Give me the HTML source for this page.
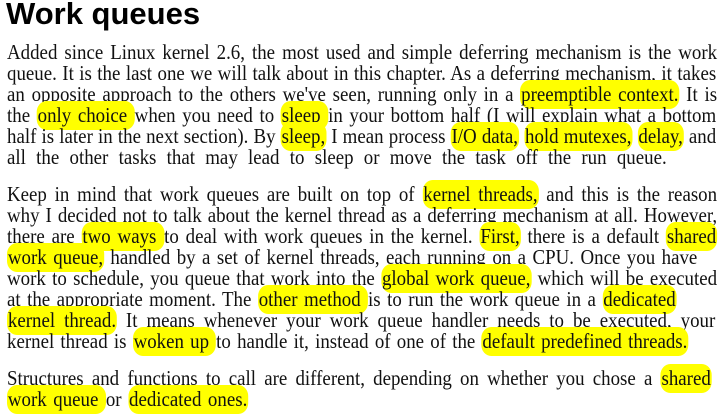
<!DOCTYPE html>
<html><head><meta charset="utf-8"><style>
body{margin:0;width:723px;height:413px;background:#fff;overflow:hidden;position:relative;font-family:"Liberation Serif",serif;color:#111}
h1{position:absolute;left:6px;top:-4px;margin:0;font:bold 31px "Liberation Sans",sans-serif;color:#000}
.l{position:absolute;left:7px;height:21px;line-height:21px;font-size:21px;white-space:nowrap;text-align:justify;text-align-last:justify;transform:scaleX(0.9);transform-origin:0 0}
.h{background:#ffff00;border-radius:11px;padding:2px 1px 3px}
</style></head><body>
<h1>Work queues</h1>
<div class="l" style="top:42px;width:789px">Added since Linux kernel 2.6, the most used and simple deferring mechanism is the work</div>
<div class="l" style="top:63px;width:788px">queue. It is the last one we will talk about in this chapter. As a deferring mechanism, it takes</div>
<div class="l" style="top:84px;width:789px">an opposite approach to the others we've seen, running only in a <span class="h">preemptible context.</span> It is</div>
<div class="l" style="top:105px;width:788px">the <span class="h">only choice </span>when you need to <span class="h">sleep </span>in your bottom half (I will explain what a bottom</div>
<div class="l" style="top:126px;width:788px">half is later in the next section). By <span class="h">sleep,</span> I mean process <span class="h">I/O data,</span> <span class="h">hold mutexes,</span> <span class="h">delay,</span> and</div>
<div class="l" style="top:147px;width:733px">all the other tasks that may lead to sleep or move the task off the run queue.</div>
<div class="l" style="top:184px;width:789px">Keep in mind that work queues are built on top of <span class="h">kernel threads,</span> and this is the reason</div>
<div class="l" style="top:205px;width:789px">why I decided not to talk about the kernel thread as a deferring mechanism at all. However,</div>
<div class="l" style="top:226px;width:789px">there are <span class="h">two ways </span>to deal with work queues in the kernel. <span class="h">First,</span> there is a default <span class="h">shared</span></div>
<div class="l" style="top:247px;width:767px"><span class="h">work queue,</span> handled by a set of kernel threads, each running on a CPU. Once you have</div>
<div class="l" style="top:268px;width:789px">work to schedule, you queue that work into the <span class="h">global work queue,</span> which will be executed</div>
<div class="l" style="top:289px;width:744px">at the appropriate moment. The <span class="h">other method </span>is to run the work queue in a <span class="h">dedicated</span></div>
<div class="l" style="top:310px;width:787px"><span class="h">kernel thread.</span> It means whenever your work queue handler needs to be executed, your</div>
<div class="l" style="top:331px;width:757px">kernel thread is <span class="h">woken up </span>to handle it, instead of one of the <span class="h">default predefined threads.</span></div>
<div class="l" style="top:368px;width:783px">Structures and functions to call are different, depending on whether you chose a <span class="h">shared</span></div>
<div class="l" style="top:389px;width:268px"><span class="h">work queue </span>or <span class="h">dedicated ones.</span></div>
</body></html>
